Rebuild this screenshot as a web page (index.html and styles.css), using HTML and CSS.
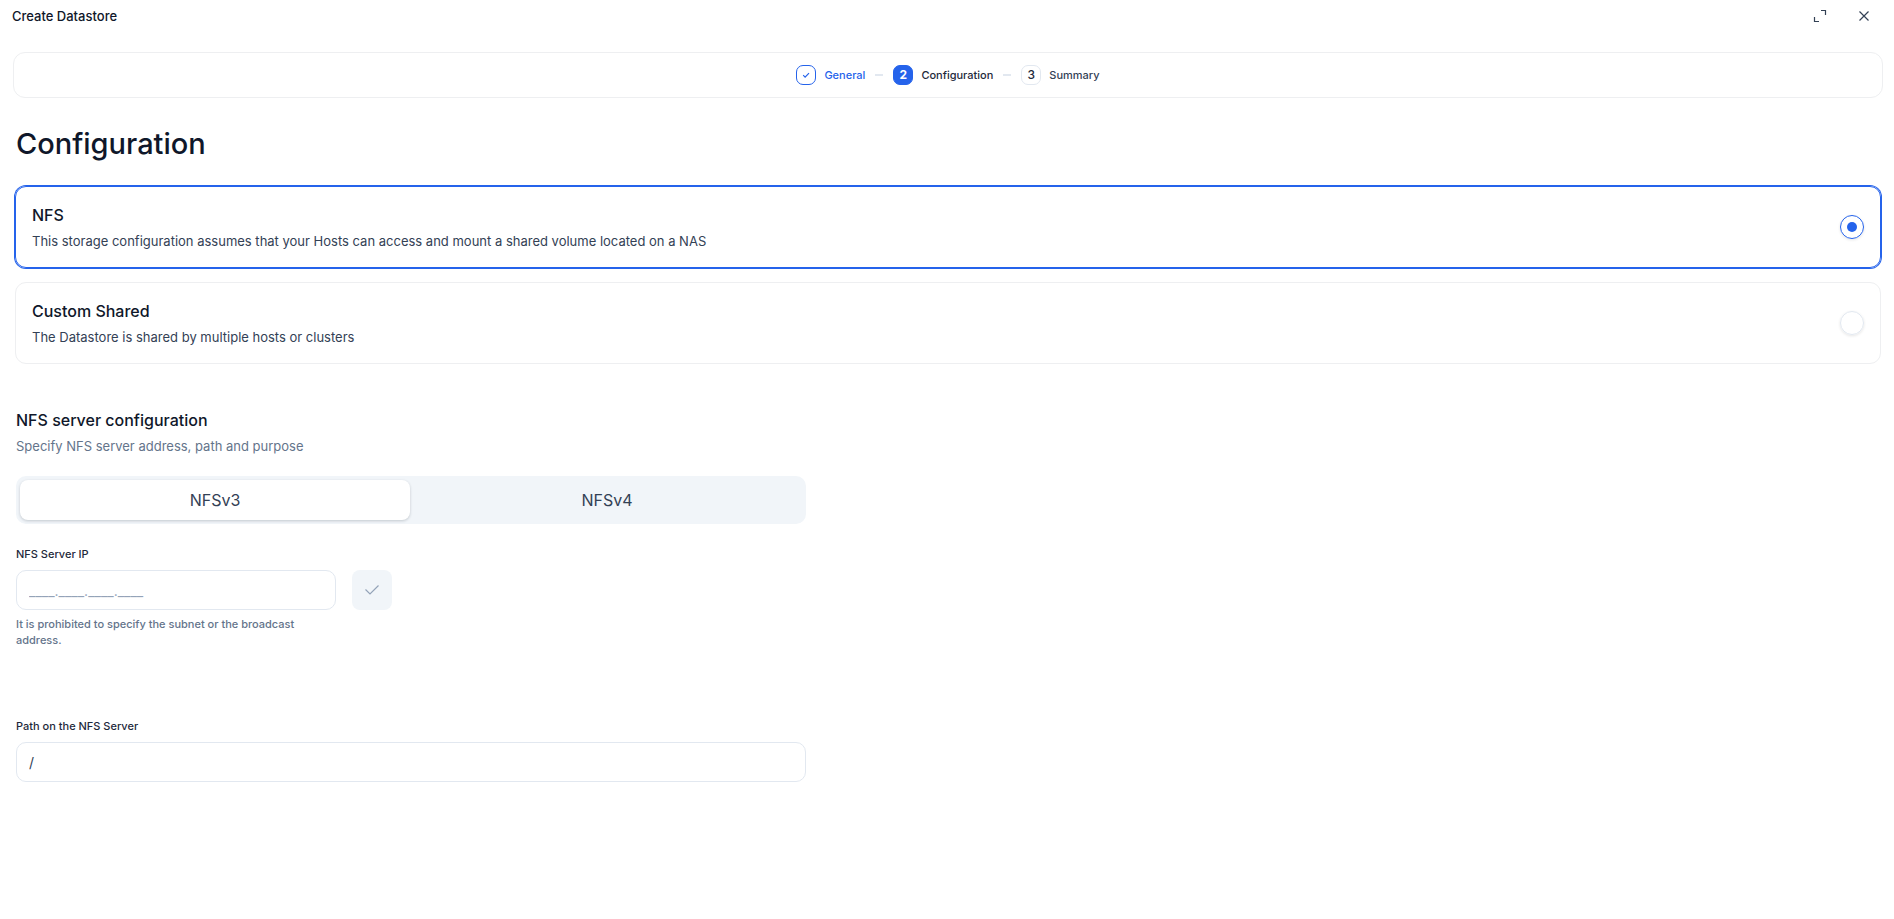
FILE: index.html
```html
<!DOCTYPE html>
<html lang="en">
<head>
<meta charset="utf-8">
<meta name="viewport" content="width=device-width, initial-scale=1">
<title>Create Datastore</title>
<link rel="stylesheet" href="styles.css">
</head>
<body>
<header class="topbar">
  <span class="topbar-title">Create Datastore</span>
  <div class="topbar-actions">
    <button class="icon-button" type="button" aria-label="Expand">
      <svg width="14" height="14" viewBox="0 0 14 14"><path d="M8 1.500h4.500V6M1.500 8v4.500H6"/></svg>
    </button>
    <button class="icon-button" type="button" aria-label="Close">
      <svg width="14" height="14" viewBox="0 0 14 14"><path d="M2.500 2.500l9 9M11.500 2.500l-9 9"/></svg>
    </button>
  </div>
</header>
<nav class="stepper" aria-label="Steps">
  <ol class="steps">
    <li class="step step-done"><span class="step-badge"><svg width="10" height="10" viewBox="0 0 10 10"><path d="M2.200 5.200l1.900 1.900 3.900-4"/></svg></span><span>General</span></li>
    <li class="step step-current" aria-current="step"><span class="step-badge">2</span><span>Configuration</span></li>
    <li class="step"><span class="step-badge">3</span><span>Summary</span></li>
  </ol>
</nav>
<main class="content">
  <h1 class="page-title">Configuration</h1>
  <div class="options">
    <label class="option option-selected">
      <span class="option-text"><span class="heading">NFS</span><span class="description">This storage configuration assumes that your Hosts can access and mount a shared volume located on a NAS</span></span>
      <input class="radio" type="radio" name="storage" checked>
    </label>
    <label class="option">
      <span class="option-text"><span class="heading">Custom Shared</span><span class="description">The Datastore is shared by multiple hosts or clusters</span></span>
      <input class="radio" type="radio" name="storage">
    </label>
  </div>
  <section class="server">
    <h2 class="heading">NFS server configuration</h2>
    <p class="description muted">Specify NFS server address, path and purpose</p>
    <div class="tabs" role="tablist">
      <button class="tab tab-active" type="button" role="tab" aria-selected="true">NFSv3</button>
      <button class="tab" type="button" role="tab" aria-selected="false">NFSv4</button>
    </div>
    <div class="field ip-field">
      <label class="field-label" for="server-ip">NFS Server IP</label>
      <div class="ip-row">
        <input class="text-input ip-input" id="server-ip" type="text" placeholder="____.____.____.____" aria-describedby="ip-hint">
        <button class="confirm" type="button" aria-label="Confirm address" disabled>
          <svg width="16" height="16" viewBox="0 0 16 16"><path d="M1.500 7.500l4.500 4.500L14.500 3.500"/></svg>
        </button>
      </div>
      <p class="hint" id="ip-hint">It is prohibited to specify the subnet or the broadcast address.</p>
    </div>
    <div class="field">
      <label class="field-label" for="server-path">Path on the NFS Server</label>
      <input class="text-input" id="server-path" type="text" value="/">
    </div>
  </section>
</main>
</body>
</html>
```
FILE: styles.css
```css
* { box-sizing: border-box; }
body {
  margin: 0;
  background: #fff;
  color: #0f172a;
  font-family: Inter, "Liberation Sans", sans-serif;
  font-size: 13px;
  line-height: 20px;
}
button, input { font: inherit; color: inherit; }
svg { display: block; fill: none; stroke: currentColor; stroke-width: 1.2; }
h1, h2, p, ol { margin: 0; padding: 0; }
.topbar {
  display: flex;
  align-items: center;
  justify-content: space-between;
  height: 32px;
  padding: 0 20px 0 12px;
}
.topbar-title { font-weight: 500; }
.topbar-actions { display: flex; gap: 24px; color: #334155; }
.icon-button {
  display: grid;
  place-items: center;
  width: 20px;
  height: 20px;
  padding: 0;
  border: 0;
  background: none;
}
.stepper {
  display: flex;
  align-items: center;
  justify-content: center;
  height: 46px;
  margin: 20px 11px 0 13px;
  border: 1px solid #eeeff1;
  border-radius: 12px;
}
.steps { display: flex; list-style: none; font-size: 11px; font-weight: 500; }
.step { display: flex; align-items: center; gap: 8px; color: #334155; }
.step + .step::before {
  content: "";
  width: 8px;
  height: 2px;
  margin: 0 2px 0 10px;
  background: #e2e8f0;
}
.step-badge {
  display: grid;
  place-items: center;
  width: 20px;
  height: 20px;
  border: 1px solid #e2e8f0;
  border-radius: 7px;
  color: #1e293b;
  font-size: 12px;
  line-height: 16px;
}
.step-done { color: #2563eb; }
.step-done .step-badge { border-color: #2563eb; color: #2563eb; }
.step-current { color: #1e293b; }
.step-current .step-badge { border-color: #2563eb; background: #2563eb; color: #fff; font-weight: 700; }
.content { padding: 28px 13px 0 15px; }
.page-title { padding-left: 1px; font-size: 29px; line-height: 36px; font-weight: 500; }
.options { display: grid; gap: 14px; margin-top: 24px; }
.option {
  display: flex;
  align-items: center;
  justify-content: space-between;
  padding: 16px;
  border: 1px solid #eeeff1;
  border-radius: 11px;
}
.option-selected { border-color: #2563eb; box-shadow: 0 0 0 1px #2563eb; }
.option-text { display: grid; gap: 4px; }
.heading { font-size: 16px; line-height: 24px; font-weight: 500; }
.description { color: #334155; }
.muted { color: #64748b; }
.radio {
  appearance: none;
  display: grid;
  place-items: center;
  width: 24px;
  height: 24px;
  margin: 0;
  border: 1px solid #e2e8f0;
  border-radius: 50%;
  box-shadow: 0 1px 3px #0000001a;
}
.radio:checked { border-color: #2563eb; }
.radio:checked::before {
  content: "";
  width: 10px;
  height: 10px;
  border-radius: 50%;
  background: #2563eb;
}
.server { max-width: 791px; margin-top: 44px; padding-left: 1px; }
.server .description { margin-top: 4px; }
.tabs {
  display: grid;
  grid-template-columns: 1fr 1fr;
  gap: 2px;
  margin-top: 20px;
  padding: 4px;
  border-radius: 10px;
  background: #f1f5f9;
}
.tab {
  height: 40px;
  padding: 0;
  border: 0;
  border-radius: 8px;
  background: none;
  color: #334155;
  font-size: 16px;
}
.tab-active { background: #fff; box-shadow: 0 1px 3px #0f172a33; }
.field { margin-top: 22px; font-size: 11px; line-height: 16px; }
.field-label { display: block; margin-bottom: 8px; color: #1e293b; font-weight: 500; }
.text-input {
  width: 100%;
  height: 40px;
  padding: 0 12px;
  border: 1px solid #e2e8f0;
  border-radius: 10px;
  background: #fff;
  color: #334155;
  font-size: 14px;
}
.text-input::placeholder { color: #94a3b8; opacity: 1; }
.ip-field { min-height: 150px; }
.ip-row { display: flex; gap: 16px; }
.ip-input { width: 320px; }
.confirm {
  display: grid;
  place-items: center;
  width: 40px;
  height: 40px;
  padding: 0;
  border: 0;
  border-radius: 8px;
  background: #f1f5f9;
  color: #94a3b8;
}
.hint { max-width: 320px; margin-top: 6px; color: #64748b; font-weight: 500; }
```
